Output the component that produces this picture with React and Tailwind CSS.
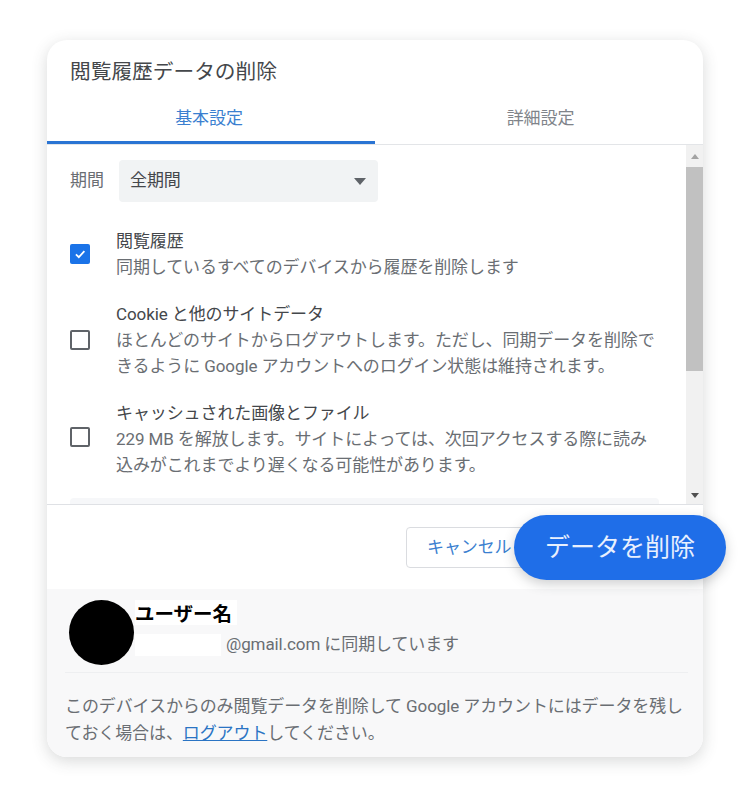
import React from "react";

function Check({ checked, className = "" }) {
  return checked ? (
    <span className={`flex h-[20px] w-[20px] shrink-0 items-center justify-center rounded-[2px] bg-[#1a73e8] ${className}`}>
      <svg width="14" height="14" viewBox="0 0 24 24" fill="none" stroke="#fff" strokeWidth="3">
        <path d="M5 12.5l5 5L19.5 7" />
      </svg>
    </span>
  ) : (
    <span className={`block h-[20px] w-[20px] shrink-0 rounded-[2px] border-2 border-[#5f6368] ${className}`} />
  );
}

function Row({ checked, title, children, className = "", boxClass = "" }) {
  return (
    <div className={`flex items-center ${className}`}>
      <Check checked={checked} className={boxClass} />
      <div className="ml-[26px] whitespace-nowrap text-[17px] leading-[26px] tracking-[-0.1px]">
        <div className="text-[#44474b]">{title}</div>
        <div className="text-[#6a6e73]">{children}</div>
      </div>
    </div>
  );
}

export default function App() {
  return (
    <div className="h-[800px] w-[750px] bg-white pl-[47px] pt-[40px] font-['Roboto','Noto_Sans_CJK_JP',sans-serif]">
      <div className="relative flex h-[717px] w-[656px] flex-col rounded-[20px] bg-white shadow-[0_4px_16px_rgba(60,64,67,0.2)]">
        <div className="h-[105px] shrink-0 border-b border-[#e3e5e8]">
          <h1 className="pl-[23px] pt-[18px] text-[20.7px] leading-[28px] text-[#44474b]">閲覧履歴データの削除</h1>
          <div className="mt-[13px] flex h-[45px]">
            <div className="flex w-[328px] items-start justify-center border-b-[3px] border-[#2a74d3] pr-[4px] pt-[7px] text-[17px] leading-[24px] tracking-[-0.1px] text-[#3b7fd0]">基本設定</div>
            <div className="flex flex-1 items-start justify-center pl-[3px] pt-[7px] text-[17px] leading-[24px] tracking-[-0.1px] text-[#80848a]">詳細設定</div>
          </div>
        </div>

        <div className="flex h-[360px] shrink-0 border-b border-[#dfe1e5]">
          <div className="flex-1 overflow-hidden pl-[23px]">
            <div className="mt-[15px] flex items-center">
              <span className="w-[49px] text-[17px] tracking-[-0.1px] text-[#6a6e73]">期間</span>
              <div className="flex h-[42px] w-[259px] items-center justify-between rounded-[4px] bg-[#f1f3f4] pl-[11px] pr-[12px] text-[17px] tracking-[-0.1px] text-[#44474b]">
                <span>全期間</span>
                <span className="h-0 w-0 border-x-[6px] border-t-[7px] border-x-transparent border-t-[#5f6368]" />
              </div>
            </div>
            <Row checked title="閲覧履歴" className="mt-[26px]">同期しているすべてのデバイスから履歴を削除します</Row>
            <Row title="Cookie と他のサイトデータ" className="mt-[21px]">
              ほとんどのサイトからログアウトします。ただし、同期データを削除で<br />
              きるように Google アカウントへのログイン状態は維持されます。
            </Row>
            <Row title="キャッシュされた画像とファイル" className="mt-[21px]" boxClass="mb-[4px]">
              229 MB を解放します。サイトによっては、次回アクセスする際に読み<br />
              込みがこれまでより遅くなる可能性があります。
            </Row>
            <div className="mr-[27px] mt-[20px] h-[20px] rounded-t-[4px] bg-[#f6f7f9]" />
          </div>
          <div className="flex w-[17px] shrink-0 flex-col bg-[#f1f1f1]">
            <div className="flex h-[22px] items-center justify-center">
              <span className="h-0 w-0 border-x-[4px] border-b-[5px] border-x-transparent border-b-[#a3a3a3]" />
            </div>
            <div className="h-[204px] bg-[#c1c1c1]" />
            <div className="flex-1" />
            <div className="flex h-[17px] items-center justify-center">
              <span className="h-0 w-0 border-x-[4px] border-t-[5px] border-x-transparent border-t-[#505050]" />
            </div>
          </div>
        </div>

        <div className="flex h-[84px] shrink-0 items-start pl-[359px] pt-[22px]">
          <button className="flex h-[41px] w-[130px] items-center whitespace-nowrap rounded-[4px] border border-[#dadce0] bg-white pl-[20px] text-[17px] tracking-[-0.1px] text-[#3b7fd0]">キャンセル</button>
        </div>

        <button className="absolute left-[467px] top-[475px] flex h-[65px] w-[212px] items-center justify-center rounded-full bg-[#1f6ee8] text-[25px] text-[#e8f0fe] shadow-[0_4px_12px_rgba(60,64,67,0.25)]">データを削除</button>

        <div className="flex-1 rounded-b-[20px] bg-[#f8f8f9] pl-[18px] pr-[15px]">
          <div className="flex h-[84px] border-b border-[#eeeff1]">
            <div className="ml-[4px] mt-[11px] h-[65px] w-[65px] shrink-0 rounded-full bg-black" />
            <div className="ml-[1px]">
              <div className="mt-[11px] flex h-[25px] w-[102px] items-center bg-white font-['Noto_Sans_CJK_JP',sans-serif] text-[19.5px] font-bold text-black">ユーザー名</div>
              <div className="mt-[8px] flex h-[23px] items-center whitespace-nowrap text-[17px] tracking-[-0.1px] text-[#6a6e73]">
                <span className="mr-[5px] h-[22px] w-[86px] bg-white" />
                <span>@gmail.com に同期しています</span>
              </div>
            </div>
          </div>
          <p className="whitespace-nowrap pt-[20px] text-[17px] leading-[27px] tracking-[-0.1px] text-[#6a6e73]">
            このデバイスからのみ閲覧データを削除して Google アカウントにはデータを残し<br />
            ておく場合は、<a className="text-[#2a74c4] underline">ログアウト</a>してください。
          </p>
        </div>
      </div>
    </div>
  );
}
